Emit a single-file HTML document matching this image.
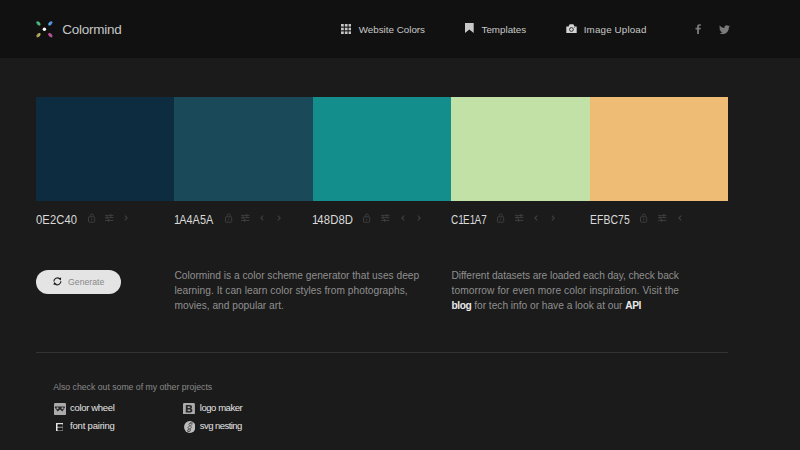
<!DOCTYPE html>
<html><head><meta charset="utf-8">
<style>
*{margin:0;padding:0;box-sizing:border-box}
html,body{width:800px;height:450px;overflow:hidden;background:#1b1b1b;font-family:"Liberation Sans",sans-serif}
.a{position:absolute;white-space:nowrap;line-height:1}
#hdr{position:absolute;left:0;top:0;width:800px;height:58px;background:#111}
.nav{color:#c8c8c8;font-size:9.8px}
.sw{position:absolute;top:97px;height:104px;width:138.4px}
.hex{color:#dadada;font-size:12px}
.ic{position:absolute}
.p{position:absolute;color:#8f8f8f;font-size:10.2px;line-height:15px;white-space:nowrap}
.p b{color:#e8e8e8;font-weight:bold;letter-spacing:-0.4px}
.ft{color:#e4e4e4;font-size:9.5px;letter-spacing:-0.34px}
</style></head><body>
<div id="hdr"></div>
<!-- logo -->
<svg class="ic" style="left:30px;top:15px" width="30" height="30" viewBox="0 0 30 30">
  <defs>
   <linearGradient id="g1" x1="0" y1="0" x2="1" y2="1"><stop offset="0" stop-color="#3a9a9a"/><stop offset="1" stop-color="#5ccc5c"/></linearGradient>
   <linearGradient id="g2" x1="1" y1="0" x2="0" y2="1"><stop offset="0" stop-color="#4a6ad0"/><stop offset="1" stop-color="#5cc8f0"/></linearGradient>
   <linearGradient id="g3" x1="1" y1="0" x2="0" y2="1"><stop offset="0" stop-color="#e0e050"/><stop offset="1" stop-color="#7a6a60"/></linearGradient>
   <linearGradient id="g4" x1="0" y1="0" x2="1" y2="1"><stop offset="0" stop-color="#e05a80"/><stop offset="1" stop-color="#8a4ab0"/></linearGradient>
  </defs>
  <circle cx="14.4" cy="14.3" r="1.7" fill="#fff"/>
  <ellipse cx="8.4" cy="8.4" rx="1.6" ry="2.6" transform="rotate(-45 8.4 8.4)" fill="url(#g1)"/>
  <ellipse cx="20.4" cy="8.4" rx="1.6" ry="2.6" transform="rotate(45 20.4 8.4)" fill="url(#g2)"/>
  <ellipse cx="8.4" cy="20.2" rx="1.6" ry="2.6" transform="rotate(45 8.4 20.2)" fill="url(#g3)"/>
  <ellipse cx="20.4" cy="20.2" rx="1.6" ry="2.6" transform="rotate(-45 20.4 20.2)" fill="url(#g4)"/>
</svg>
<div class="a" style="left:62.2px;top:23.3px;font-size:13.5px;color:#c6c6c6;letter-spacing:-0.25px">Colormind</div>

<!-- nav -->
<svg class="ic" style="left:340.6px;top:23.6px" width="10.4" height="10" viewBox="0 0 10.4 10">
  <g fill="#c4c4c4">
  <rect x="0" y="0" width="2.8" height="2.6"/><rect x="3.8" y="0" width="2.8" height="2.6"/><rect x="7.6" y="0" width="2.8" height="2.6"/>
  <rect x="0" y="3.7" width="2.8" height="2.6"/><rect x="3.8" y="3.7" width="2.8" height="2.6"/><rect x="7.6" y="3.7" width="2.8" height="2.6"/>
  <rect x="0" y="7.4" width="2.8" height="2.6"/><rect x="3.8" y="7.4" width="2.8" height="2.6"/><rect x="7.6" y="7.4" width="2.8" height="2.6"/>
  </g>
</svg>
<div class="a nav" style="left:358.75px;top:25.1px">Website Colors</div>
<svg class="ic" style="left:465.3px;top:23.4px" width="8.8" height="10" viewBox="0 0 8.8 10">
  <path d="M0 0H8.7V10L4.35 6.4L0 10Z" fill="#c8c8c8"/>
</svg>
<div class="a nav" style="left:481.5px;top:25.1px">Templates</div>
<svg class="ic" style="left:565.8px;top:23.6px" width="11" height="9.4" viewBox="0 0 11 9.4">
  <path d="M0.3 2.6Q0.3 2.4 0.6 2.4H2.6L3.3 0.8Q3.5 0.3 4 0.3H7.1Q7.6 0.3 7.8 0.8L8.4 2.4H10.4Q10.7 2.4 10.7 2.7V8.9Q10.7 9.2 10.4 9.2H0.6Q0.3 9.2 0.3 8.9Z" fill="#d4d4d4"/>
  <circle cx="5.4" cy="5.5" r="1.9" fill="none" stroke="#222" stroke-width="0.9"/>
  <circle cx="8.3" cy="3.6" r="0.5" fill="#555"/>
</svg>
<div class="a nav" style="left:583.75px;top:25.1px;letter-spacing:0.15px">Image Upload</div>
<svg class="ic" style="left:695.4px;top:23.7px" width="7" height="10.2" viewBox="0.3 0 7 11">
  <path d="M2.3 11V6H0.6V4.1H2.3V2.7C2.3 1 3.3 0.2 4.8 0.2C5.5 0.2 6.1 0.3 6.3 0.3V2H5.3C4.5 2 4.3 2.4 4.3 3V4.1H6.3L6 6H4.3V11Z" fill="#7a7a7a"/>
</svg>
<svg class="ic" style="left:718.5px;top:24.5px" width="11" height="9.5" viewBox="0 0 24 20">
  <path d="M24 2.4c-.9.4-1.8.6-2.8.8 1-.6 1.8-1.6 2.2-2.7-1 .6-2 1-3.1 1.2C19.4.6 18.1 0 16.6 0c-2.7 0-4.9 2.2-4.9 4.9 0 .4 0 .8.1 1.1C7.7 5.8 4.1 3.9 1.7.9c-.4.7-.7 1.6-.7 2.5 0 1.7.9 3.2 2.2 4.1-.8 0-1.6-.2-2.2-.6v.1c0 2.4 1.7 4.4 3.9 4.8-.4.1-.8.2-1.3.2-.3 0-.6 0-.9-.1.6 2 2.4 3.4 4.6 3.4-1.7 1.3-3.8 2.1-6.1 2.1-.4 0-.8 0-1.2-.1 2.2 1.4 4.8 2.2 7.5 2.2 9.1 0 14-7.5 14-14v-.6c1-.7 1.8-1.6 2.5-2.5z" fill="#7a7a7a"/>
</svg>

<!-- swatches -->
<div class="sw" style="left:36px;background:#0E2C40"></div>
<div class="sw" style="left:174.4px;background:#1A4A5A"></div>
<div class="sw" style="left:312.8px;background:#148D8D"></div>
<div class="sw" style="left:451.2px;background:#C1E1A7"></div>
<div class="sw" style="left:589.6px;width:138.4px;background:#EFBC75"></div>

<div class="a hex" style="left:36.2px;top:213.8px;letter-spacing:0.1px;transform:scaleX(0.934);transform-origin:0 0">0E2C40</div>
<div class="a hex" style="left:174.1px;top:213.8px;letter-spacing:0.1px;transform:scaleX(0.905);transform-origin:0 0"><span style="letter-spacing:-1.0px">1</span>A4A5A</div>
<div class="a hex" style="left:312.1px;top:213.8px;letter-spacing:0.1px;transform:scaleX(0.944);transform-origin:0 0"><span style="letter-spacing:-1.0px">1</span>48D8D</div>
<div class="a hex" style="left:450.9px;top:213.8px;letter-spacing:0.1px;transform:scaleX(0.83);transform-origin:0 0">C<span style="letter-spacing:-1.0px">1</span>E<span style="letter-spacing:-1.0px">1</span>A7</div>
<div class="a hex" style="left:589.8px;top:213.8px;letter-spacing:0.1px;transform:scaleX(0.867);transform-origin:0 0">EFBC75</div>

<svg class="ic" style="left:88.00px;top:212.5px" width="8" height="10" viewBox="0 0 8 10"><path d="M2.3 3.6V2.5A1.5 1.5 0 0 1 5.3 2.5V3" stroke="#3e3e3e" stroke-width="1" fill="none"/><rect x="0.5" y="3.8" width="6.2" height="5.4" rx="0.6" stroke="#3e3e3e" stroke-width="1" fill="none"/><rect x="3" y="5.9" width="1.2" height="1.3" fill="#3e3e3e"/></svg>
<svg class="ic" style="left:104.80px;top:213px" width="9" height="9" viewBox="0 0 9 9"><g stroke="#3e3e3e" stroke-width="1" fill="none"><path d="M0 2.4H8.4M0 4.6H8.4M0 7.4H8.4"/></g><g fill="#3e3e3e"><rect x="5.2" y="1" width="1.2" height="2.8"/><rect x="1.6" y="3.3" width="1.2" height="2.8"/><rect x="3" y="6" width="1.2" height="2.8"/></g></svg>
<svg class="ic" style="left:123.60px;top:214.5px" width="4" height="6" viewBox="0 0 4 6"><path d="M0.8 0.6L3.2 3L0.8 5.4" stroke="#3e3e3e" stroke-width="1.2" fill="none"/></svg>
<svg class="ic" style="left:224.60px;top:212.5px" width="8" height="10" viewBox="0 0 8 10"><path d="M2.3 3.6V2.5A1.5 1.5 0 0 1 5.3 2.5V3" stroke="#3e3e3e" stroke-width="1" fill="none"/><rect x="0.5" y="3.8" width="6.2" height="5.4" rx="0.6" stroke="#3e3e3e" stroke-width="1" fill="none"/><rect x="3" y="5.9" width="1.2" height="1.3" fill="#3e3e3e"/></svg>
<svg class="ic" style="left:241.00px;top:213px" width="9" height="9" viewBox="0 0 9 9"><g stroke="#3e3e3e" stroke-width="1" fill="none"><path d="M0 2.4H8.4M0 4.6H8.4M0 7.4H8.4"/></g><g fill="#3e3e3e"><rect x="5.2" y="1" width="1.2" height="2.8"/><rect x="1.6" y="3.3" width="1.2" height="2.8"/><rect x="3" y="6" width="1.2" height="2.8"/></g></svg>
<svg class="ic" style="left:260.40px;top:214.5px" width="4" height="6" viewBox="0 0 4 6"><path d="M3.2 0.6L0.8 3L3.2 5.4" stroke="#3e3e3e" stroke-width="1.2" fill="none"/></svg>
<svg class="ic" style="left:277.40px;top:214.5px" width="4" height="6" viewBox="0 0 4 6"><path d="M0.8 0.6L3.2 3L0.8 5.4" stroke="#3e3e3e" stroke-width="1.2" fill="none"/></svg>
<svg class="ic" style="left:362.60px;top:212.5px" width="8" height="10" viewBox="0 0 8 10"><path d="M2.3 3.6V2.5A1.5 1.5 0 0 1 5.3 2.5V3" stroke="#3e3e3e" stroke-width="1" fill="none"/><rect x="0.5" y="3.8" width="6.2" height="5.4" rx="0.6" stroke="#3e3e3e" stroke-width="1" fill="none"/><rect x="3" y="5.9" width="1.2" height="1.3" fill="#3e3e3e"/></svg>
<svg class="ic" style="left:380.90px;top:213px" width="9" height="9" viewBox="0 0 9 9"><g stroke="#3e3e3e" stroke-width="1" fill="none"><path d="M0 2.4H8.4M0 4.6H8.4M0 7.4H8.4"/></g><g fill="#3e3e3e"><rect x="5.2" y="1" width="1.2" height="2.8"/><rect x="1.6" y="3.3" width="1.2" height="2.8"/><rect x="3" y="6" width="1.2" height="2.8"/></g></svg>
<svg class="ic" style="left:400.60px;top:214.5px" width="4" height="6" viewBox="0 0 4 6"><path d="M3.2 0.6L0.8 3L3.2 5.4" stroke="#3e3e3e" stroke-width="1.2" fill="none"/></svg>
<svg class="ic" style="left:417.40px;top:214.5px" width="4" height="6" viewBox="0 0 4 6"><path d="M0.8 0.6L3.2 3L0.8 5.4" stroke="#3e3e3e" stroke-width="1.2" fill="none"/></svg>
<svg class="ic" style="left:497.20px;top:212.5px" width="8" height="10" viewBox="0 0 8 10"><path d="M2.3 3.6V2.5A1.5 1.5 0 0 1 5.3 2.5V3" stroke="#3e3e3e" stroke-width="1" fill="none"/><rect x="0.5" y="3.8" width="6.2" height="5.4" rx="0.6" stroke="#3e3e3e" stroke-width="1" fill="none"/><rect x="3" y="5.9" width="1.2" height="1.3" fill="#3e3e3e"/></svg>
<svg class="ic" style="left:515.00px;top:213px" width="9" height="9" viewBox="0 0 9 9"><g stroke="#3e3e3e" stroke-width="1" fill="none"><path d="M0 2.4H8.4M0 4.6H8.4M0 7.4H8.4"/></g><g fill="#3e3e3e"><rect x="5.2" y="1" width="1.2" height="2.8"/><rect x="1.6" y="3.3" width="1.2" height="2.8"/><rect x="3" y="6" width="1.2" height="2.8"/></g></svg>
<svg class="ic" style="left:534.20px;top:214.5px" width="4" height="6" viewBox="0 0 4 6"><path d="M3.2 0.6L0.8 3L3.2 5.4" stroke="#3e3e3e" stroke-width="1.2" fill="none"/></svg>
<svg class="ic" style="left:550.60px;top:214.5px" width="4" height="6" viewBox="0 0 4 6"><path d="M0.8 0.6L3.2 3L0.8 5.4" stroke="#3e3e3e" stroke-width="1.2" fill="none"/></svg>
<svg class="ic" style="left:639.80px;top:212.5px" width="8" height="10" viewBox="0 0 8 10"><path d="M2.3 3.6V2.5A1.5 1.5 0 0 1 5.3 2.5V3" stroke="#3e3e3e" stroke-width="1" fill="none"/><rect x="0.5" y="3.8" width="6.2" height="5.4" rx="0.6" stroke="#3e3e3e" stroke-width="1" fill="none"/><rect x="3" y="5.9" width="1.2" height="1.3" fill="#3e3e3e"/></svg>
<svg class="ic" style="left:657.90px;top:213px" width="9" height="9" viewBox="0 0 9 9"><g stroke="#3e3e3e" stroke-width="1" fill="none"><path d="M0 2.4H8.4M0 4.6H8.4M0 7.4H8.4"/></g><g fill="#3e3e3e"><rect x="5.2" y="1" width="1.2" height="2.8"/><rect x="1.6" y="3.3" width="1.2" height="2.8"/><rect x="3" y="6" width="1.2" height="2.8"/></g></svg>
<svg class="ic" style="left:677.60px;top:214.5px" width="4" height="6" viewBox="0 0 4 6"><path d="M3.2 0.6L0.8 3L3.2 5.4" stroke="#3e3e3e" stroke-width="1.2" fill="none"/></svg>


<!-- button -->
<div class="ic" style="left:36px;top:269.6px;width:85.25px;height:24.4px;border-radius:12.2px;background:#e4e4e4"></div>
<svg class="ic" style="left:53px;top:277px" width="9" height="9" viewBox="0 0 9 9">
  <g stroke="#262626" stroke-width="1.2" fill="none">
  <path d="M0.9 4.4A3.5 3.5 0 0 1 6.6 1.7"/>
  <path d="M7.9 4.3A3.5 3.5 0 0 1 2.2 7"/>
  </g>
  <path d="M5.2 1.6L8.2 0.6L7.8 3.6Z" fill="#1a1a1a"/>
  <path d="M3.6 7.1L0.6 8.1L1.0 5.1Z" fill="#1a1a1a"/>
</svg>
<div class="a" style="left:68.1px;top:278.2px;font-size:8.7px;color:#888">Generate</div>

<!-- paragraphs -->
<div class="p" style="left:174.5px;top:268.2px"><span>Colormind is a color scheme generator that uses deep</span><br><span style="letter-spacing:0.03px">learning. It can learn color styles from photographs,</span><br><span>movies, and popular art.</span></div>
<div class="p" style="left:451.5px;top:268.2px"><span style="letter-spacing:-0.068px">Different datasets are loaded each day, check back</span><br><span style="letter-spacing:0.07px">tomorrow for even more color inspiration. Visit the</span><br><span style="letter-spacing:-0.02px"><b>blog</b> for tech info or have a look at our <b>API</b></span></div>

<div class="ic" style="left:36px;top:352px;width:692px;height:1px;background:#333"></div>

<!-- footer -->
<div class="a" style="left:53.3px;top:383px;font-size:8.7px;color:#8a8a8a">Also check out some of my other projects</div>
<svg class="ic" style="left:53.5px;top:402.6px" width="12" height="12.1" viewBox="0 0 12 12.1">
  <rect x="0" y="0" width="12" height="12.1" rx="1.2" fill="#ababab"/>
  <path d="M0.8 3.4H10.9V4.5L8.4 8.5L6.05 6.6L3.6 8.5L0.8 4.5Z" fill="#2a2a2a"/>
  <circle cx="3.5" cy="5.3" r="1.05" fill="#a8a8a8"/>
  <circle cx="8.5" cy="5.3" r="1.05" fill="#a8a8a8"/>
</svg>
<div class="a ft" style="left:70.1px;top:403.2px">color wheel</div>
<svg class="ic" style="left:55.6px;top:422.6px" width="7.9" height="8.2" viewBox="0 0 7.9 8.2">
  <rect x="0" y="0" width="7.9" height="8.2" fill="#7a7a7a"/>
  <rect x="0" y="0" width="1.6" height="8.2" fill="#e8e8e8"/>
  <rect x="0" y="0" width="7.9" height="1.3" fill="#e0e0e0"/>
  <rect x="1.6" y="1.4" width="4.9" height="2.2" fill="#111"/>
  <rect x="1.6" y="5.1" width="4.9" height="2.1" fill="#111"/>
</svg>
<div class="a ft" style="left:70.1px;top:420.8px;letter-spacing:-0.2px">font pairing</div>
<svg class="ic" style="left:183.3px;top:402.6px" width="11.9" height="11.9" viewBox="0 0 11.9 11.9">
  <rect x="0" y="0" width="11.9" height="11.9" rx="1.2" fill="#ababab"/>
  <path fill-rule="evenodd" d="M2.8 2.1H6.6C8.4 2.1 9.1 3 9.1 4.1C9.1 4.9 8.6 5.4 8 5.6C8.9 5.8 9.4 6.5 9.4 7.4C9.4 8.7 8.4 9.5 6.8 9.5H2.8ZM4.7 3.6V5H6.4C7 5 7.3 4.8 7.3 4.3C7.3 3.8 7 3.6 6.4 3.6ZM4.7 6.4V8H6.6C7.2 8 7.5 7.7 7.5 7.2C7.5 6.7 7.2 6.4 6.6 6.4Z" fill="#2a2a2a"/>
</svg>
<div class="a ft" style="left:199.8px;top:403.2px;letter-spacing:-0.45px">logo maker</div>
<svg class="ic" style="left:183.6px;top:420.5px" width="11.6" height="12" viewBox="0 0 11.6 12">
  <ellipse cx="5.8" cy="6" rx="5.75" ry="6" fill="#bdbdbd"/>
  <g stroke="#505050" stroke-width="0.85" fill="none" transform="translate(-0.3 0) skewX(-14) translate(1.5 0)">
  <path d="M8.2 2.2C6.6 1 4 2 4.6 3.6C5.2 5 8.2 4.8 7.8 6.8C7.4 8.4 4.4 7.6 4.6 9.2C4.8 10.6 7 10.6 7.6 9.8"/>
  <path d="M4.8 2.6C6.4 1.8 8 2.6 7.4 3.8C6.8 5 4.2 5 4.4 6.6C4.6 8 7.6 7.6 7.8 9C8 10.4 5.6 11 4.4 9.8"/>
  </g>
</svg>
<div class="a ft" style="left:199.8px;top:420.8px;letter-spacing:-0.55px">svg nesting</div>
</body></html>
